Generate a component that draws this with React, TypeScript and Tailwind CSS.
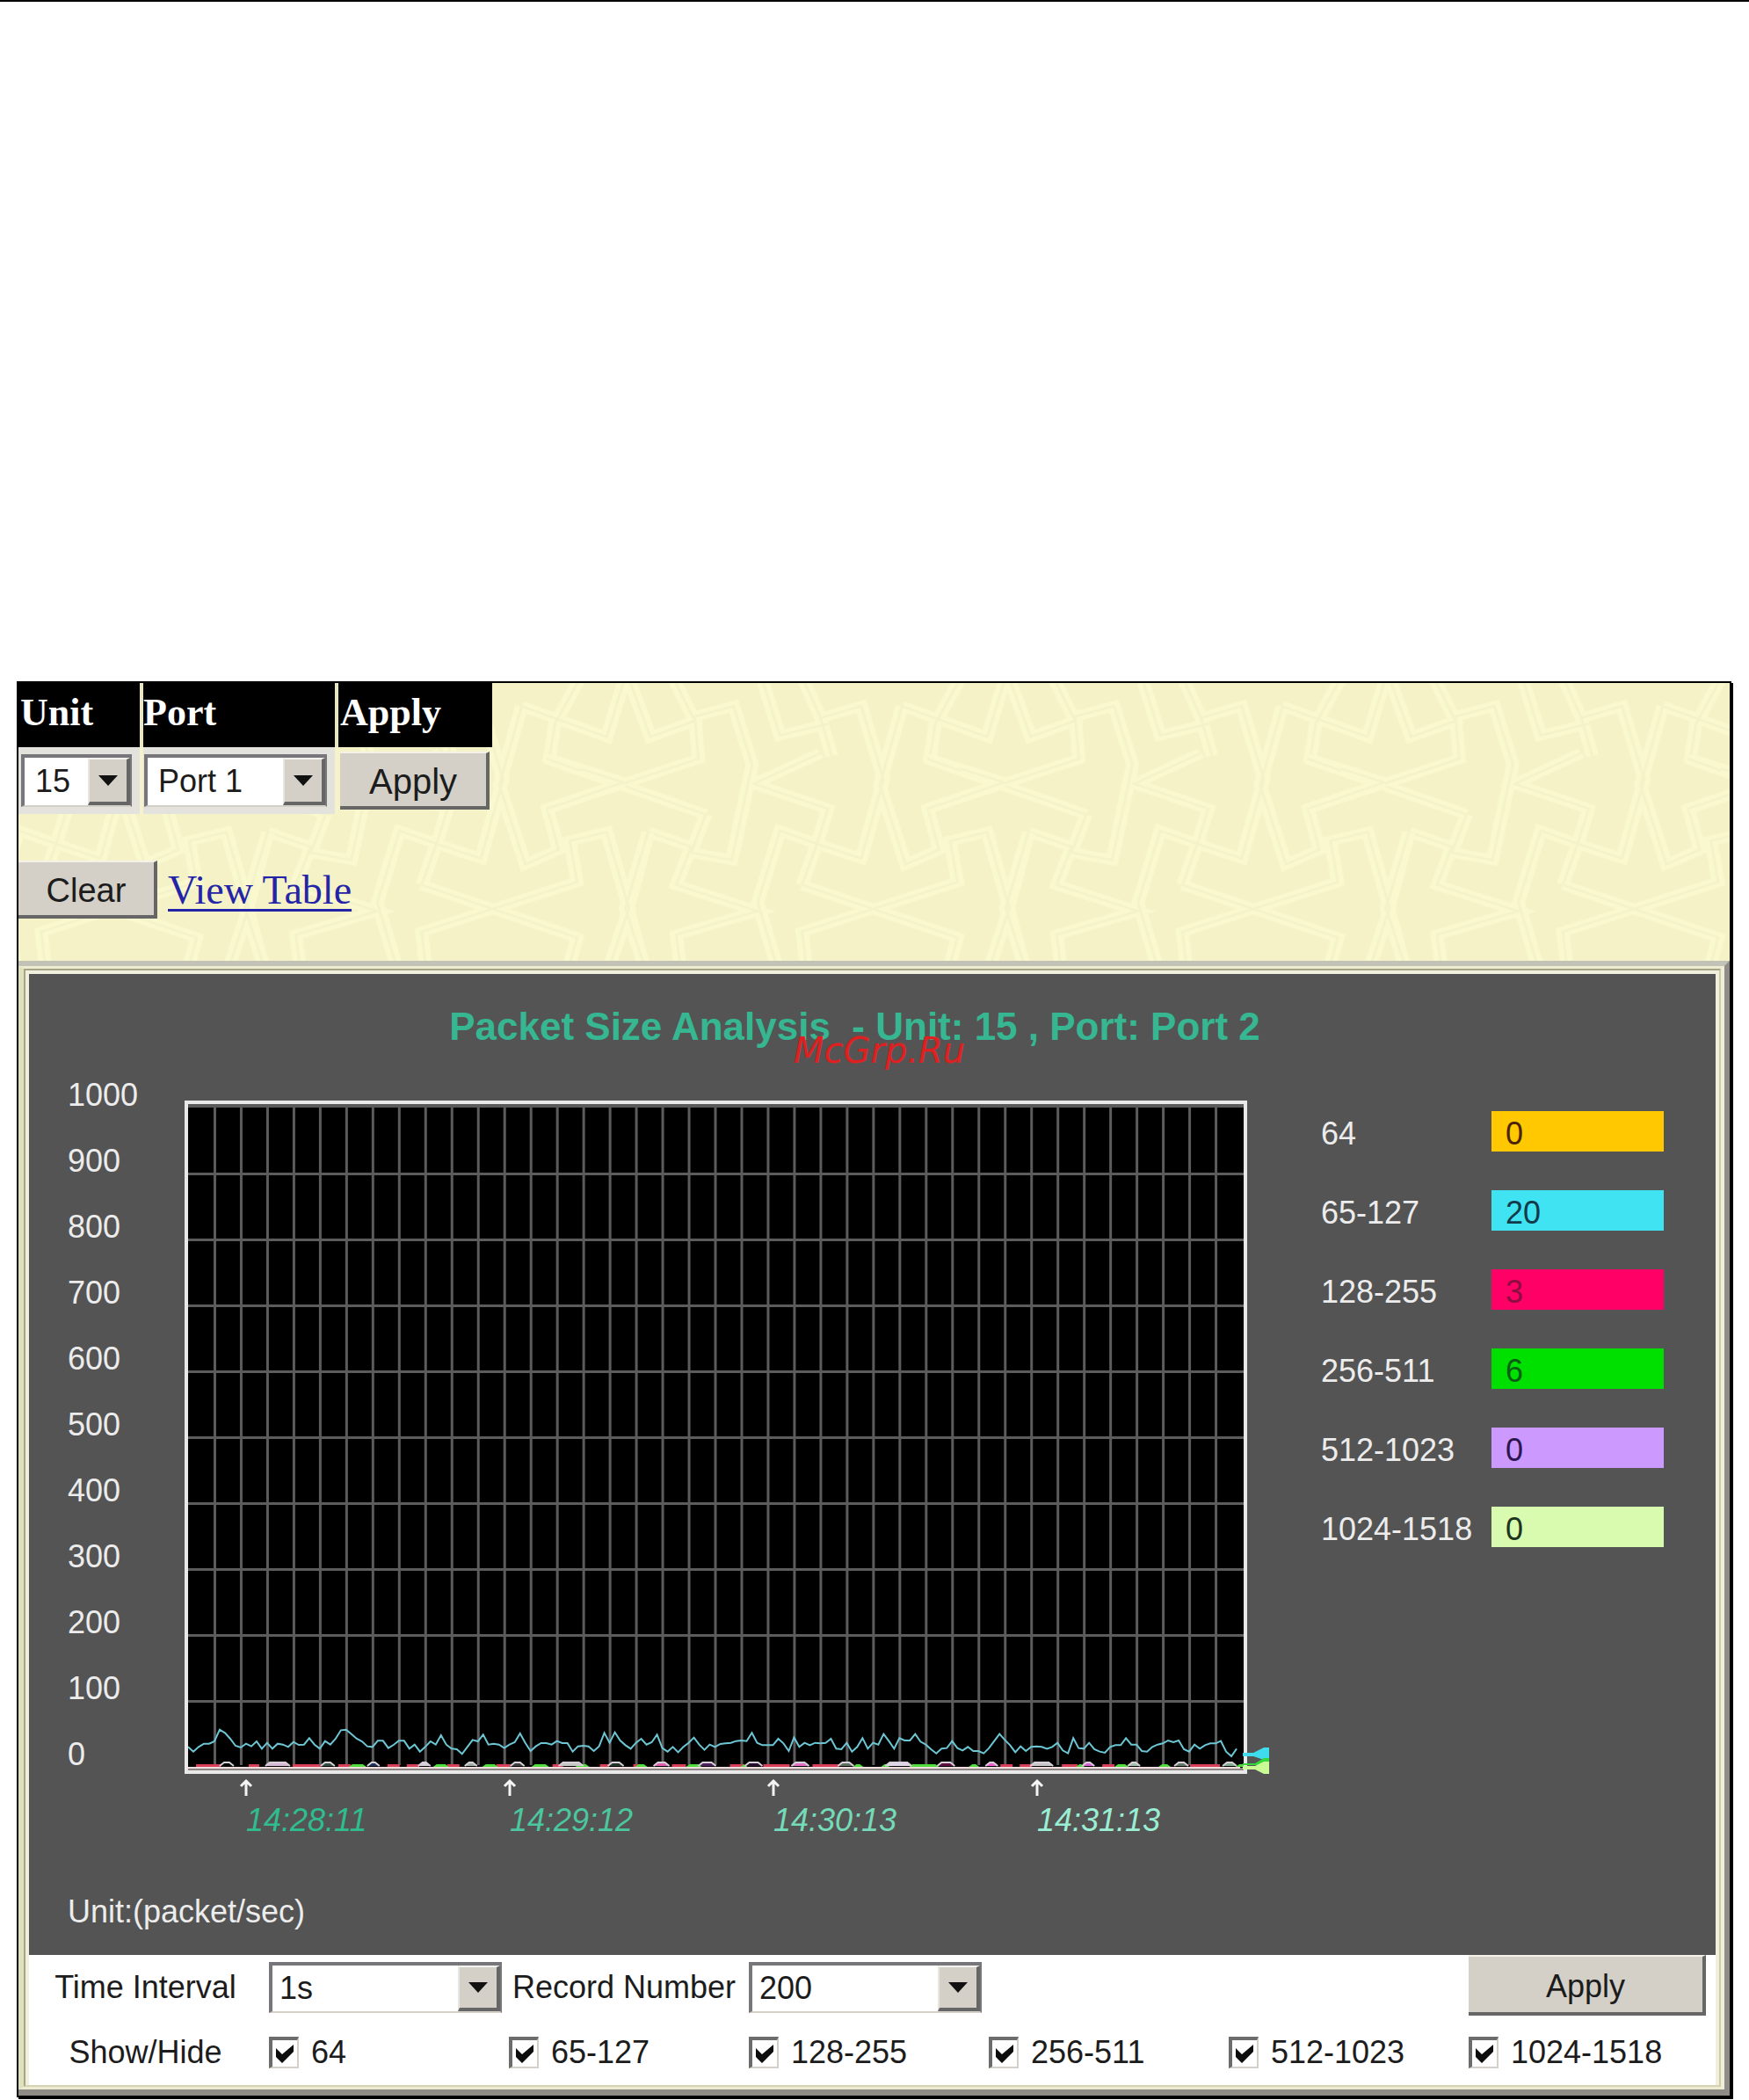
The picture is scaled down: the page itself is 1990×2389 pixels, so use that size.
import { useState } from 'react';
import type { ReactNode } from 'react';

interface PacketRange {
  label: string;
  value: number;
  swatch: string;
  text: string;
}

const RANGES: PacketRange[] = [
  { label: '64', value: 0, swatch: 'bg-[#ffc800]', text: 'text-[#4a2408]' },
  { label: '65-127', value: 20, swatch: 'bg-[#40e3f2]', text: 'text-[#123a4a]' },
  { label: '128-255', value: 3, swatch: 'bg-[#ff0066]', text: 'text-[#8a0f40]' },
  { label: '256-511', value: 6, swatch: 'bg-[#00e000]', text: 'text-[#0a5c14]' },
  { label: '512-1023', value: 0, swatch: 'bg-[#cc99ff]', text: 'text-[#2c1650]' },
  { label: '1024-1518', value: 0, swatch: 'bg-[#d8fbb0]', text: 'text-[#1c3420]' },
];

const Y_TICKS = [1000, 900, 800, 700, 600, 500, 400, 300, 200, 100, 0];

const TIMES = [
  { label: '14:28:11', color: 'text-[#2fbd8f]' },
  { label: '14:29:12', color: 'text-[#4cc69e]' },
  { label: '14:30:13', color: 'text-[#74dab8]' },
  { label: '14:31:13', color: 'text-[#9aeed4]' },
];

// 200 records of the 65-127 range, as depth below the top of the trace strip
const TRACE = [
  112, 128, 112, 101, 101, 93, 53, 64, 84, 108, 114, 101, 110, 93, 118, 98, 118, 101, 104, 112,
  95, 105, 104, 82, 104, 118, 92, 104, 84, 55, 53, 68, 84, 93, 110, 112, 91, 91, 116, 105,
  91, 91, 118, 104, 128, 112, 93, 104, 72, 104, 118, 120, 136, 112, 88, 93, 70, 104, 101, 104,
  116, 104, 96, 66, 98, 126, 110, 99, 99, 104, 92, 99, 99, 128, 110, 108, 110, 126, 110, 64,
  98, 62, 90, 106, 118, 98, 84, 104, 96, 70, 116, 128, 112, 130, 112, 98, 80, 104, 122, 104,
  112, 102, 100, 98, 92, 90, 92, 64, 98, 106, 106, 106, 84, 100, 126, 80, 112, 98, 106, 98,
  100, 98, 84, 118, 120, 98, 128, 112, 82, 118, 98, 104, 68, 92, 118, 82, 90, 90, 68, 94,
  104, 120, 134, 118, 116, 92, 116, 124, 112, 126, 126, 134, 116, 92, 68, 88, 106, 130, 110, 126,
  112, 110, 112, 118, 112, 98, 124, 134, 82, 116, 118, 98, 120, 128, 132, 112, 106, 106, 82, 104,
  104, 126, 128, 112, 104, 100, 90, 96, 90, 120, 128, 104, 118, 106, 100, 100, 92, 128, 144, 118,
];

const tracePoints = TRACE.map((y, i) => `${5 + i * 6},${700 + y / 3}`).join(' ');

// x, half width of the flat top, tint inside the bump
const BUMPS: [number, number, string][] = [
  [49, 3, '#000000'],
  [107, 9, '#d8b8d8'],
  [164, 3, '#305040'],
  [216, 2, '#203060'],
  [274, 2, '#d8d0e0'],
  [327, 2, '#a0b0a0'],
  [380, 3, '#404040'],
  [441, 9, '#c8c8c8'],
  [492, 4, '#203828'],
  [544, 4, '#e060b0'],
  [596, 5, '#502060'],
  [649, 5, '#281030'],
  [702, 5, '#e070c0'],
  [754, 4, '#607060'],
  [814, 10, '#e0d8e8'],
  [868, 5, '#601040'],
  [920, 2, '#f060d0'],
  [977, 8, '#c8c8c8'],
  [1030, 2, '#d860d0'],
  [1082, 2, '#a0c0a8'],
  [1136, 3, '#607868'],
  [1191, 3, '#80b090'],
];

const RED_RUNS = [
  [14, 42], [74, 86], [124, 156], [176, 190], [232, 246], [254, 268], [300, 314], [356, 372],
  [420, 432], [474, 484], [512, 522], [556, 572], [622, 638], [660, 690], [716, 746], [846, 856],
  [930, 944], [952, 966], [1000, 1018], [1046, 1060], [1146, 1180],
];

const GREEN_RUNS = [
  [190, 206], [286, 300], [342, 356], [398, 414], [448, 460], [516, 526], [574, 588], [636, 640],
  [764, 772], [796, 802], [828, 858], [896, 904], [1018, 1024], [1062, 1074], [1112, 1122], [1200, 1208],
];

function PatternBackdrop() {
  return (
    <svg className="absolute inset-0 h-full w-full" aria-hidden="true">
      <defs>
        <path
          id="weave"
          d="M-90 310L340 500M-90 480L320 310L310 165L415 130L465 330L410 655L300 630L340 500M650 290L470 395L670 480L640 600L760 650L820 380L760 130L650 170L680 300M490 30L540 230L670 190M600 30L650 170M870 130L810 400L880 670L970 620L940 480L1145 390M870 130L1100 235L1150 30M1030 30L960 190L945 310L1145 390M600 740L1020 920L1000 1010M610 1010L600 900L1020 730L1000 590L1100 560L1160 820L1110 1010M600 740L640 600L540 555L480 800L530 1010M185 560L300 610L260 740L480 830L260 910L270 1010M185 560L130 820L170 1010M1212 560L1150 820L1200 1010M130 30L190 235L310 180L250 30"
          fill="none"
        />
        <g id="weaveTile">
          <use href="#weave" stroke="#f9f8ce" strokeWidth="36" />
          <use href="#weave" stroke="#f4f2c9" strokeWidth="7" />
        </g>
        <pattern
          id="weavePattern"
          width="1028"
          height="1040"
          patternUnits="userSpaceOnUse"
          patternTransform="translate(639 -17) scale(0.421 0.3333)"
        >
          <rect width="1028" height="1040" fill="#f4f2c6" />
          <use href="#weaveTile" />
          <use href="#weaveTile" x="-1028" />
          <use href="#weaveTile" x="1028" />
        </pattern>
      </defs>
      <rect width="100%" height="100%" fill="url(#weavePattern)" />
    </svg>
  );
}

interface ClassicSelectProps {
  id: string;
  options: string[];
  className: string;
}

function ClassicSelect({ id, options, className }: ClassicSelectProps) {
  const [value, setValue] = useState(options[0]);

  return (
    <div className={`relative ${className}`}>
      <select
        id={id}
        aria-label={id}
        value={value}
        onChange={(e) => setValue(e.target.value)}
        className="h-full w-full appearance-none border-2 border-l-4 border-t-4 border-[#77767a] border-b-[#d4d0c8] bg-white text-4xl text-[#1c1c1c]"
      >
        {options.map((option) => (
          <option key={option}>{option}</option>
        ))}
      </select>
      <span className="pointer-events-none absolute bottom-0.5 right-0.5 top-1 flex w-12 items-center justify-center border-b-4 border-l-2 border-r-4 border-t-2 border-b-[#666] border-l-[#e8e6e0] border-r-[#666] border-t-[#f4f2ee] bg-[#d4d0c8]">
        <svg className="h-3 w-6" viewBox="0 0 24 12">
          <path d="M1 0H23L12 12Z" fill="#111" />
        </svg>
      </span>
    </div>
  );
}

function ClassicButton({ children, className }: { children: ReactNode; className: string }) {
  return (
    <button
      type="button"
      className={`flex items-center justify-center border-b-4 border-r-4 border-t-2 border-b-[#666] border-r-[#666] border-t-[#f4f2e8] bg-[#d4d0c8] pt-1 text-[#1c1c1c] ${className}`}
    >
      {children}
    </button>
  );
}

function RangeToggle({ label }: { label: string }) {
  const [checked, setChecked] = useState(true);

  return (
    <label className="flex h-10 items-center gap-3.5">
      <span className="relative h-9 w-[34px]">
        <input
          type="checkbox"
          checked={checked}
          onChange={() => setChecked(!checked)}
          className="block h-full w-full appearance-none border-2 border-l-4 border-t-4 border-[#d4d0c8] border-l-[#6c6c6c] border-t-[#6c6c6c] bg-white"
        />
        {checked && (
          <svg className="pointer-events-none absolute inset-0 h-full w-full" viewBox="0 0 34 36">
            <path d="M8 13L15 20L28 9V17L15 30L8 23Z" fill="#0c0c0c" />
          </svg>
        )}
      </span>
      {label}
    </label>
  );
}

function Chart() {
  return (
    <svg className="block h-[770px] w-full" viewBox="0 0 1240 770" preserveAspectRatio="none">
      <rect x="3" y="4" width="1206" height="762" fill="#000" />
      <rect x="5" y="6" width="1202" height="4" fill="#5a5a5a" />

      {/* Grid */}
      {Array.from({ length: 39 }).map((_, i) => (
        <rect key={`v${i}`} x={34 + i * 30} y="8" width="3" height="750" fill="#5c5c5c" />
      ))}
      {Array.from({ length: 9 }).map((_, i) => (
        <rect key={`h${i}`} x="5" y={84 + i * 75} width="1202" height="3" fill="#5c5c5c" />
      ))}

      {/* Low traffic ranges along the base line */}
      <rect x="5" y="761" width="1202" height="4" fill="#8c8583" />
      {RED_RUNS.map(([from, to]) => (
        <rect key={from} x={from} y="757" width={to - from} height="3" fill="#d8405a" />
      ))}
      {GREEN_RUNS.map(([from, to]) => (
        <path key={from} d={`M${from - 2} 760L${from + 2} 757H${to - 2}L${to + 2} 760Z`} fill="#4fdc3c" />
      ))}
      {BUMPS.map(([x, half, fill]) => (
        <path
          key={x}
          d={`M${x - half - 5} 759L${x - half} 755H${x + half}L${x + half + 5} 759`}
          fill={fill}
          stroke="#d8d0d8"
          strokeWidth="2"
        />
      ))}
      <rect x="5" y="760" width="1198" height="2" fill="#f0dede" />

      <polyline points={tracePoints} fill="none" stroke="#6cc6d4" strokeWidth="2" />

      {/* Frame */}
      <rect x="3" y="4" width="1206" height="762" fill="none" stroke="#e9e9e9" strokeWidth="4" />

      {/* Current value markers */}
      <path d="M1206 744H1218L1230 738H1236V752H1230L1218 748H1206Z" fill="#3fdcee" />
      <path d="M1206 756H1220L1230 750H1236V758H1206Z" fill="#35d83a" />
      <path d="M1206 759H1220L1230 754H1236V768H1230L1220 763H1206Z" fill="#c9fa96" />
    </svg>
  );
}

export default function App() {
  return (
    <main className="min-h-screen border-t-2 border-black bg-white pb-0.5 pl-[19px] pr-5 pt-[773px] font-['Liberation_Sans',Arial,sans-serif]">
      <div className="border-2 border-black shadow-[2px_2px_0_#000]">
        {/* Unit and port selection */}
        <section className="relative h-[316px] bg-[#f4f2c6]">
          <PatternBackdrop />
          <div className="relative">
            <table className="border-collapse">
              <thead>
                <tr className="h-[73px] bg-black text-left font-['Liberation_Serif',serif] text-[44px] leading-none text-white">
                  <th className="w-[140px] border-r-4 border-[#e9e6c0] pb-1.5 pl-0.5">Unit</th>
                  <th className="w-[222px] border-r-4 border-[#e9e6c0] pb-1.5 pl-0">Port</th>
                  <th className="w-[177px] pb-1.5 pl-0.5">Apply</th>
                </tr>
              </thead>
              <tbody>
                <tr className="h-[76px]">
                  <td className="border-r-4 border-[#f6f3cc] bg-[#e4e2dc] pl-[3px]">
                    <ClassicSelect id="Unit" options={['15', '1', '2']} className="h-[60px] w-[126px] [&_select]:pl-3" />
                  </td>
                  <td className="border-r-4 border-[#f6f3cc] bg-[#e4e2dc] pl-px">
                    <ClassicSelect id="Port" options={['Port 1', 'Port 2']} className="h-[60px] w-[208px] [&_select]:pl-3" />
                  </td>
                  <td className="pl-0.5">
                    <ClassicButton className="h-[66px] w-[170px] text-[40px]">Apply</ClassicButton>
                  </td>
                </tr>
              </tbody>
            </table>
            <div className="mt-[53px] flex items-center gap-3">
              <ClassicButton className="h-[66px] w-[158px] text-[38px]">Clear</ClassicButton>
              <a
                href="#table"
                className="pt-0.5 font-['Liberation_Serif',serif] text-[46px] leading-none text-[#2424a8] underline decoration-[3px] underline-offset-[6px]"
              >
                View Table
              </a>
            </div>
          </div>
        </section>

        {/* Graph */}
        <section className="border-b-[7px] border-r-[6px] border-t-[6px] border-b-[#8f8b86] border-r-[#8f8b86] border-t-[#c3c2b6]">
          <div className="border-b-[3px] border-l-[6px] border-r-4 border-t-[3px] border-b-[#ecebd2] border-l-[#dfe1ba] border-r-[#f0eedb] border-t-[#eeecd0]">
            <div className="border-2 border-[#a5a486] border-r-[#cfcba6] border-b-[#d5d3b4]">
              <div className="border-l-4 border-r-4 border-t-4 border-[#f1f0df]">
                <div className="relative bg-[#545454] pb-[29px] pt-9 text-4xl text-[#ececec]">
                  <h1 className="whitespace-pre pr-10 text-center text-[44px] font-bold leading-[48px] text-[#36b792]">
                    {'Packet Size Analysis  - Unit: 15 , Port: Port 2'}
                  </h1>
                  <span className="absolute left-[870px] top-[63px] font-['DejaVu_Sans',sans-serif] text-[40px] italic leading-[48px] text-[#e02020]">
                    McGrp.Ru
                  </span>

                  <div className="mt-4 flex">
                    <div className="w-[176px] shrink-0 pl-11">
                      {Y_TICKS.map((tick) => (
                        <div key={tick} className="leading-[75px]">
                          {tick}
                        </div>
                      ))}
                    </div>

                    <div className="min-w-0 flex-1 pt-[42px]">
                      <Chart />
                      <div className="flex pl-[63px] pt-[3px]">
                        {TIMES.map((time) => (
                          <div key={time.label} className="w-[300px] shrink-0">
                            <svg className="h-5 w-4" viewBox="0 0 16 20">
                              <path d="M8 20V3M2 9L8 3L14 9" fill="none" stroke="#f4f4f4" strokeWidth="3" />
                            </svg>
                            <div className={`mt-2 pl-2 italic leading-10 ${time.color}`}>{time.label}</div>
                          </div>
                        ))}
                      </div>
                    </div>

                    <ul className="flex w-[504px] shrink-0 flex-col gap-11 pl-[55px] pr-[59px] pt-14">
                      {RANGES.map((range) => (
                        <li key={range.label} className="flex h-[46px] justify-between leading-[52px]">
                          <span>{range.label}</span>
                          <span className={`h-full w-[196px] pl-4 ${range.swatch} ${range.text}`}>{range.value}</span>
                        </li>
                      ))}
                    </ul>
                  </div>

                  <p className="mt-16 pl-11 leading-10">Unit:(packet/sec)</p>
                </div>

                {/* Graph settings */}
                <form className="bg-white pb-[17px] pr-2 text-4xl leading-10 text-[#1c1c1c]">
                  <div className="grid h-[69px] grid-cols-7 items-center">
                    <label htmlFor="Time Interval" className="pr-2 pt-1 text-center">
                      Time Interval
                    </label>
                    <div className="pt-1">
                      <ClassicSelect id="Time Interval" options={['1s', '5s', '10s']} className="h-[58px] w-[265px] [&_select]:pl-2" />
                    </div>
                    <label htmlFor="Record Number" className="whitespace-nowrap pl-1 pt-1">
                      Record Number
                    </label>
                    <div className="pt-1">
                      <ClassicSelect id="Record Number" options={['200', '100', '50']} className="h-[58px] w-[265px] [&_select]:pl-2" />
                    </div>
                    <ClassicButton className="col-start-7 h-full w-[270px]">Apply</ClassicButton>
                  </div>
                  <div className="grid grid-cols-7 pt-[22px]">
                    <span className="pr-2 text-center">Show/Hide</span>
                    {RANGES.map((range) => (
                      <RangeToggle key={range.label} label={range.label} />
                    ))}
                  </div>
                </form>
              </div>
            </div>
          </div>
        </section>
      </div>
    </main>
  );
}
